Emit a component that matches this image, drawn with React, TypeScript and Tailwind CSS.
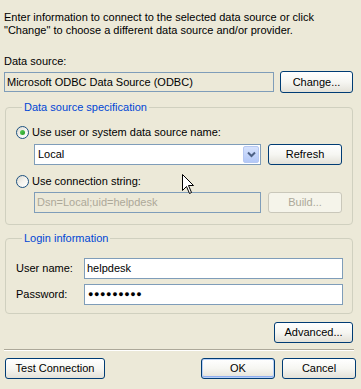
import React from "react";

const btn =
  "flex items-center justify-center rounded-[3px] border border-[#003C74] bg-gradient-to-b from-[#FFFFFF] via-[#F6F6F2] to-[#E3E1D8] text-black";

function Radio({ checked }: { checked?: boolean }) {
  return (
    <span className="flex h-[13px] w-[13px] shrink-0 items-center justify-center rounded-full border border-[#1C5180] bg-gradient-to-br from-[#DCD9CF] via-[#F4F3EE] to-[#FFFFFF]">
      {checked && (
        <span className="h-[5px] w-[5px] rounded-full bg-gradient-to-br from-[#5CD05C] to-[#1E9A1E]" />
      )}
    </span>
  );
}

function Cursor() {
  return (
    <svg className="absolute left-[182px] top-[174px]" width="13" height="21" viewBox="0 0 13 21">
      <path
        d="M0.5 0.5 L0.5 16.5 L4.5 12.5 L7.5 19.5 L9.5 18.5 L6.5 11.5 L11.5 11.5 Z"
        fill="#fff"
        stroke="#000"
        strokeWidth="1"
        strokeLinejoin="miter"
      />
    </svg>
  );
}

export default function App() {
  return (
    <div className="relative h-[389px] w-[361px] overflow-hidden bg-[#ECE9D8] text-[11px] leading-[13px] text-black [font-family:'Liberation_Sans',Arial,sans-serif]">
      <div className="pl-[4px] pt-[11px]">
        <p>Enter information to connect to the selected data source or click</p>
        <p>"Change" to choose a different data source and/or provider.</p>
      </div>

      <p className="mt-[18px] pl-[4px]">Data source:</p>
      <div className="mt-[3px] flex h-[22px] items-center pl-[4px]">
        <div className="flex h-[20px] w-[270px] items-center border border-[#7F9DB9] bg-[#ECE9D8] pl-[2px]">
          Microsoft ODBC Data Source (ODBC)
        </div>
        <button className={`${btn} ml-[6px] h-[22px] w-[73px]`}>Change...</button>
      </div>

      <fieldset className="ml-[5px] mt-[8px] w-[348px] rounded-[4px] border border-[#D0D0BF] pb-[11px] pl-[10px]">
        <legend className="ml-[6px] px-[2px] text-[#0046D5]">Data source specification</legend>
        <div className="mt-[12px] flex items-center gap-[3px]">
          <Radio checked />
          <span>Use user or system data source name:</span>
        </div>
        <div className="ml-[18px] mt-[5px] flex items-center">
          <div className="flex h-[21px] w-[227px] items-center justify-between border border-[#7F9DB9] bg-white pl-[3px] pr-[1px]">
            <span>Local</span>
            <span className="flex h-[17px] w-[16px] items-center justify-center rounded-[2px] border border-[#B6C8F2] bg-gradient-to-b from-[#D6E2FD] to-[#B3C8F7]">
              <svg width="9" height="7" viewBox="0 0 9 7">
                <path d="M1 1.5 L4.5 5 L8 1.5" fill="none" stroke="#4D6185" strokeWidth="2" />
              </svg>
            </span>
          </div>
          <button className={`${btn} ml-[7px] h-[21px] w-[74px]`}>Refresh</button>
        </div>
        <div className="mt-[10px] flex items-center gap-[3px]">
          <Radio />
          <span>Use connection string:</span>
        </div>
        <div className="ml-[18px] mt-[4px] flex items-center">
          <div className="flex h-[21px] w-[227px] items-center border border-[#7F9DB9] bg-[#ECE9D8] pl-[2px] text-[#ACA899]">
            Dsn=Local;uid=helpdesk
          </div>
          <button className="ml-[7px] flex h-[21px] w-[74px] items-center justify-center rounded-[3px] border border-[#C9C7BA] bg-[#F5F4EA] text-[#ACA899]">
            Build...
          </button>
        </div>
      </fieldset>

      <fieldset className="ml-[5px] mt-[7px] w-[348px] rounded-[4px] border border-[#D0D0BF] pb-[8px] pl-[10px]">
        <legend className="ml-[6px] px-[2px] text-[#0046D5]">Login information</legend>
        <div className="mt-[13px] flex items-center">
          <span className="w-[68px]">User name:</span>
          <div className="flex h-[21px] w-[259px] items-center border border-[#7F9DB9] bg-white pl-[2px]">
            helpdesk
          </div>
        </div>
        <div className="mt-[5px] flex items-center">
          <span className="w-[68px]">Password:</span>
          <div className="flex h-[21px] w-[259px] items-center border border-[#7F9DB9] bg-white pl-[3px] text-[9px] tracking-[0.6px]">
            ●●●●●●●●●
          </div>
        </div>
      </fieldset>

      <div className="mt-[8px] flex justify-end pr-[8px]">
        <button className={`${btn} h-[21px] w-[79px]`}>Advanced...</button>
      </div>

      <div className="ml-[4px] mt-[6px] w-[350px] border-b border-t border-b-white border-t-[#ACA899]" />

      <div className="mt-[7px] flex items-center px-[5px]">
        <button className={`${btn} h-[21px] w-[100px]`}>Test Connection</button>
        <button
          className={`${btn} ml-auto h-[21px] w-[74px] shadow-[inset_0_0_0_1px_#B8D0F7,inset_0_-1px_0_1px_#8FAEF0]`}
        >
          OK
        </button>
        <button className={`${btn} ml-[7px] h-[21px] w-[74px]`}>Cancel</button>
      </div>

      <Cursor />
    </div>
  );
}
